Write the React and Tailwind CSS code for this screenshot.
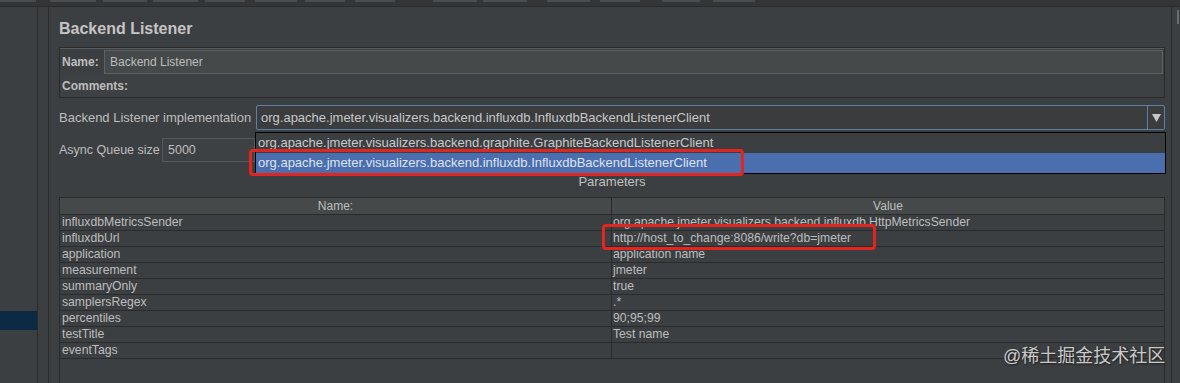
import React from 'react';

const params = [
    ['influxdbMetricsSender', 'org.apache.jmeter.visualizers.backend.influxdb.HttpMetricsSender'],
    ['influxdbUrl', 'http://host_to_change:8086/write?db=jmeter'],
    ['application', 'application name'],
    ['measurement', 'jmeter'],
    ['summaryOnly', 'true'],
    ['samplersRegex', '.*'],
    ['percentiles', '90;95;99'],
    ['testTitle', 'Test name'],
    ['eventTags', ''],
];

const toolbarBits = [
    [0, 36], [50, 46], [103, 44], [153, 45], [205, 40], [255, 42], [305, 40], [355, 40], [433, 44], [483, 44], [547, 43], [600, 40], [662, 38], [713, 42],
];

const IMPL_GRAPHITE = 'org.apache.jmeter.visualizers.backend.graphite.GraphiteBackendListenerClient';
const IMPL_INFLUX = 'org.apache.jmeter.visualizers.backend.influxdb.InfluxdbBackendListenerClient';

const App = () => {
    return (
        <div
            className="relative w-[1180px] h-[383px] overflow-hidden bg-[#3c3f41] text-[#bdbdbd] flex flex-col"
            style={{ fontFamily: '"Liberation Sans", Arial, "Noto Sans CJK SC", sans-serif' }}
        >
            {/* toolbar edge */}
            <div className="h-[7px] flex bg-[#333537] border-b border-[#2b2b2b]">
                <div className="flex h-[2px] w-full">
                    {toolbarBits.map(([x, w], i) => (
                        <div
                            key={i}
                            className="h-[2px] bg-[#4a4d50]"
                            style={{ marginLeft: i === 0 ? x : x - toolbarBits[i - 1][0] - toolbarBits[i - 1][1], width: w }}
                        />
                    ))}
                </div>
            </div>

            <div className="flex flex-1 min-h-0">
                {/* tree panel */}
                <div className="w-[38px] flex flex-col border-r border-[#2b2b2b]">
                    <div className="h-[304px]" />
                    <div className="h-[19px] bg-[#0d2a45]" />
                </div>
                <div className="w-[11px] border-r border-[#2b2b2b] bg-[#3c3f41]" />

                {/* main editor */}
                <div className="flex-1 flex flex-col pl-[10px] pr-[6px] border-r border-[#2b2b2b]">
                    <div className="pt-[13px] mb-[9px] text-[16px] leading-[18px] font-bold text-[#c4c4c4]">
                        Backend Listener
                    </div>

                    {/* name + comments box */}
                    <div className="h-[51px] border border-[#2b2b2b] shadow-[inset_0_1px_0_#5a5d5f] flex flex-col pl-[1px] pr-[1px] pt-[1px]">
                        <div className="flex items-center h-[25px]">
                            <span className="w-[43px] pl-[1px] text-[12px] font-bold">Name:</span>
                            <div className="flex-1 h-[24px] bg-[#45494a] border border-[#5e6162] flex items-center pl-[5px] text-[12px]">
                                Backend Listener
                            </div>
                        </div>
                        <div className="flex-1 flex items-center pl-[1px] text-[12px] font-bold bg-[#3e4143]">Comments:</div>
                    </div>

                    {/* implementation */}
                    <div className="mt-[7px] h-[25px] flex items-center">
                        <span className="w-[197px] text-[13px]">Backend Listener implementation</span>
                        <div className="flex-1 h-[25px] border border-[#5b80a8] rounded-[2px] bg-[#3a3c3e] flex items-center">
                            <span className="flex-1 pl-[4px] text-[13px] text-[#c8c8c8]">{IMPL_INFLUX}</span>
                            <div className="w-[17px] h-full border-l border-[#5b80a8] flex items-center justify-center">
                                <svg width="9" height="8" viewBox="0 0 9 8"><path d="M0 0 H9 L4.5 8 Z" fill="#c8c8c8" /></svg>
                            </div>
                        </div>
                    </div>

                    {/* async queue */}
                    <div className="mt-[8px] h-[24px] flex items-center">
                        <span className="w-[103px] text-[12.5px]">Async Queue size</span>
                        <div className="w-[93px] h-[24px] bg-[#3e4143] border border-[#56595b] flex items-center pl-[5px] text-[12.5px]">
                            5000
                        </div>
                    </div>

                    <div className="mt-[11px] h-[18px] flex items-center justify-center text-[13px] text-[#c0c0c0]">
                        Parameters
                    </div>

                    {/* table */}
                    <div className="mt-[6px] flex-1 flex flex-col border-l border-r border-t border-[#2b2b2b]">
                        <div className="h-[17px] flex bg-[#45494a] border-b border-[#2b2b2b] text-[12px]">
                            <div className="w-[552px] border-r border-[#2b2b2b] flex items-center justify-center">Name:</div>
                            <div className="flex-1 flex items-center justify-center">Value</div>
                        </div>
                        {params.map(([name, value]) => (
                            <div key={name} className="h-[16px] flex border-b border-[#2b2b2b] text-[12.2px] leading-[15px]">
                                <div className="w-[552px] border-r border-[#2b2b2b] pl-[2px] flex items-center">{name}</div>
                                <div className="flex-1 pl-[1px] flex items-center">{value}</div>
                            </div>
                        ))}
                    </div>
                </div>

                {/* right edge */}
                <div className="w-[8px] flex flex-col pt-[3px] pl-[5px]">
                    <div className="w-[2px] h-[14px] bg-[#6a6d70]" />
                </div>
            </div>

            {/* open dropdown popup */}
            <div className="absolute left-[255px] top-[132px] w-[911px] h-[42px] border border-black bg-[#3c3f41] flex flex-col text-[13px]">
                <div className="h-[20px] flex items-center pl-[2px] text-[#c8c8c8]">{IMPL_GRAPHITE}</div>
                <div className="h-[20px] flex items-center pl-[2px] bg-[#4b6eaf] text-[#dde3ee]">{IMPL_INFLUX}</div>
            </div>

            {/* annotations */}
            <div className="absolute left-[249px] top-[149px] w-[495px] h-[27px] border-[3px] border-[#e3251f] rounded-[4px]" />
            <div className="absolute left-[602px] top-[224px] w-[274px] h-[26px] border-[3px] border-[#e3251f] rounded-[4px]" />

            {/* watermark */}
            <div
                className="absolute left-[1003px] top-[345px] text-[18px] leading-[22px] text-[#c9c9c9] [text-shadow:1px_1px_2px_#1c1c1c]"
                style={{ fontFamily: '"Liberation Sans", "Noto Sans CJK SC", sans-serif' }}
            >
                @稀土掘金技术社区
            </div>
        </div>
    );
};

export default App;
